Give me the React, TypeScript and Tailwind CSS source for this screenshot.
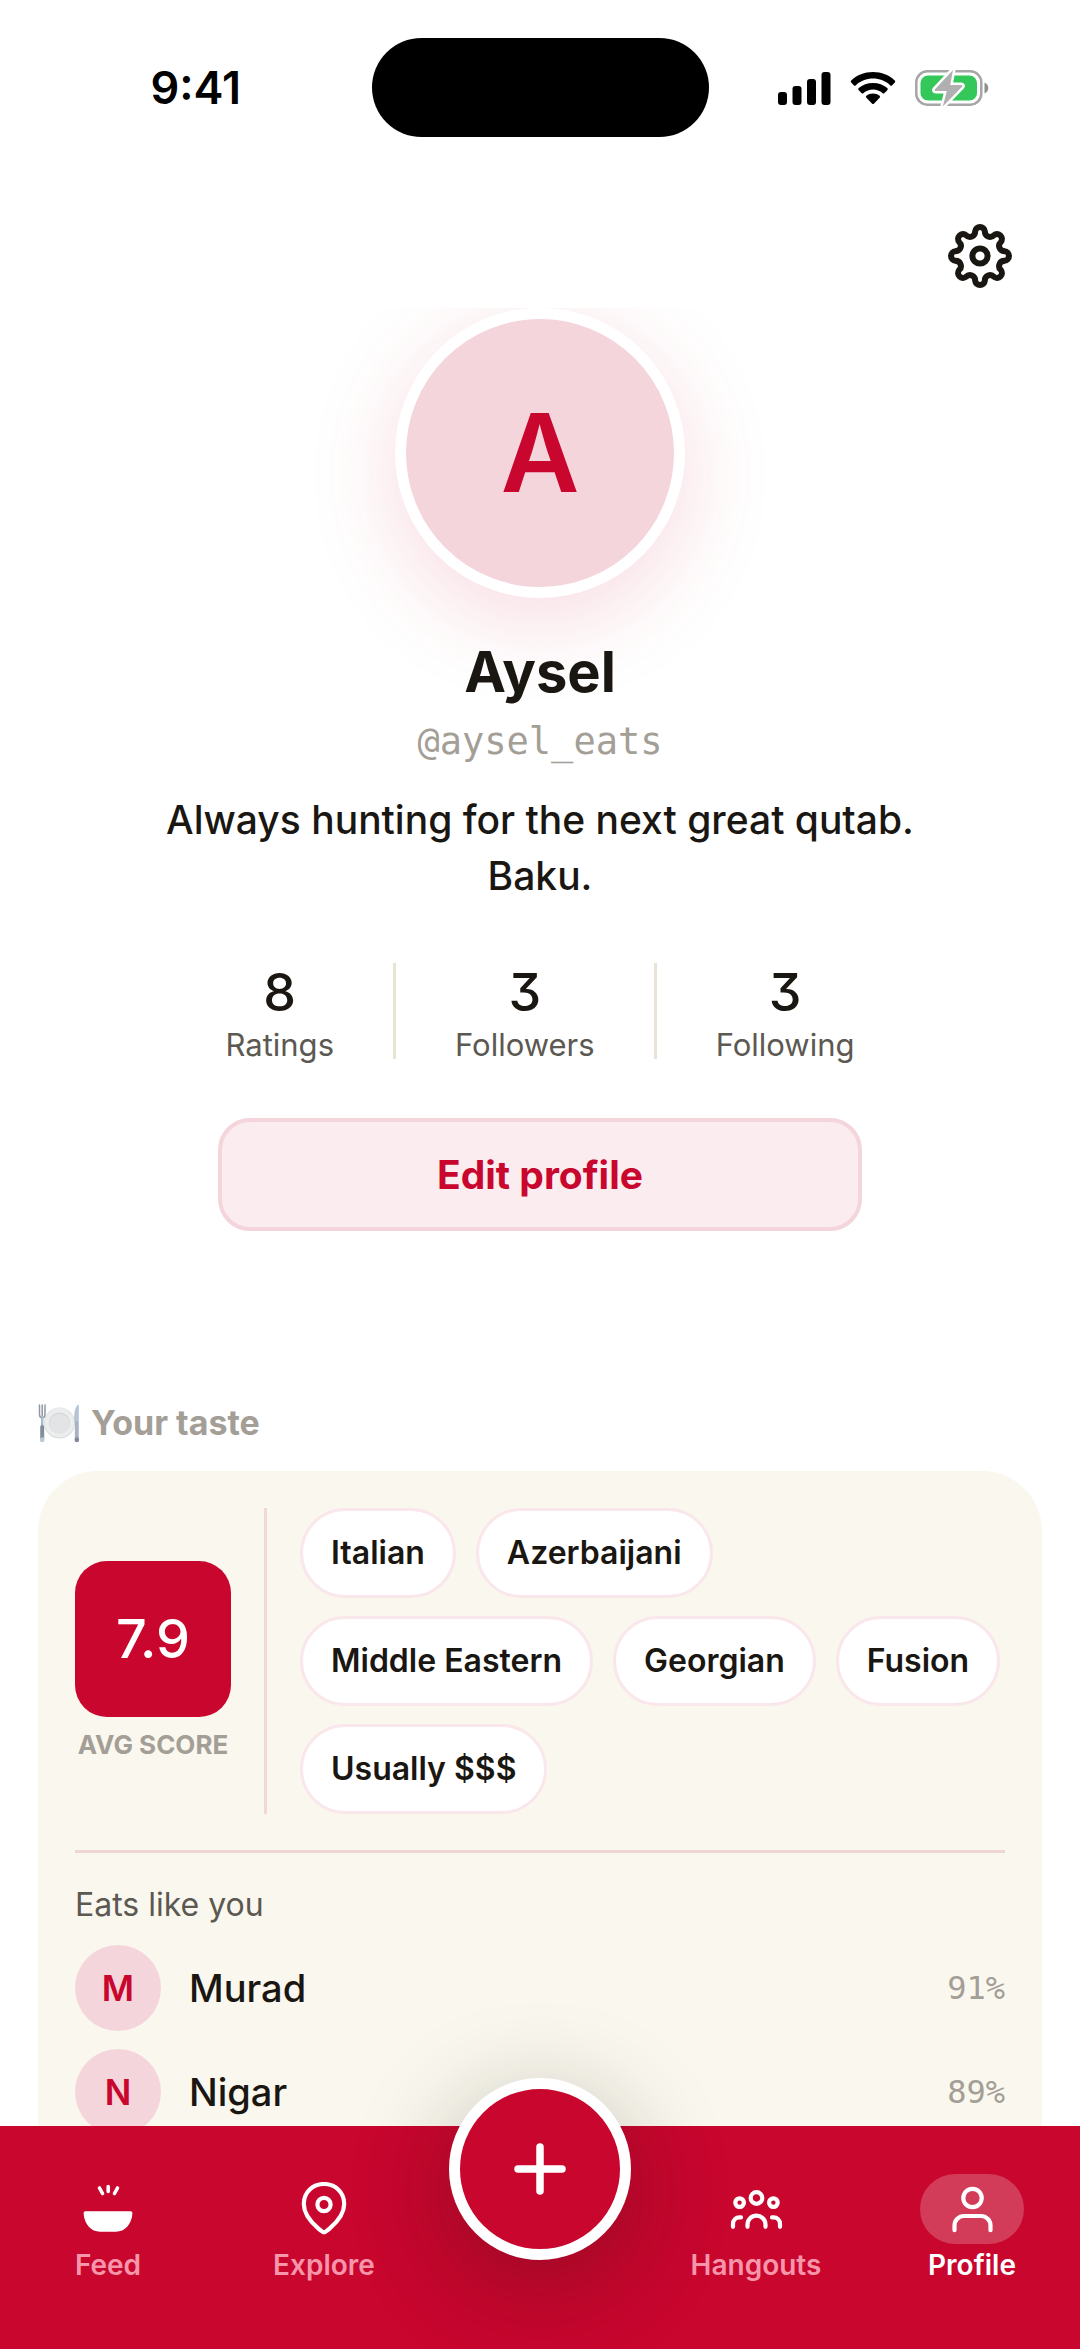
import type { ReactNode } from "react";

const stats = [
  { value: "8", label: "Ratings" },
  { value: "3", label: "Followers" },
  { value: "3", label: "Following" },
];

const tastes = ["Italian", "Azerbaijani", "Middle Eastern", "Georgian", "Fusion", "Usually $$$"];

const matches = [
  { name: "Murad", score: "91%" },
  { name: "Nigar", score: "89%" },
];

/* Eight rounded lobes joined by eight rounded valleys. */
function gearPath() {
  const radius = 25;
  let d = "";
  for (let i = 0; i <= 16; i++) {
    const a = ((i * 22.5 - 11.25 - 90) * Math.PI) / 180;
    const x = (radius * Math.cos(a)).toFixed(2);
    const y = (radius * Math.sin(a)).toFixed(2);
    if (i === 0) d += `M${x} ${y}`;
    else d += i % 2 === 1 ? `A4.9 4.9 0 0 1 ${x} ${y}` : `A5.2 5.2 0 0 0 ${x} ${y}`;
  }
  return d + "Z";
}

function GearIcon() {
  return (
    <svg width="72" height="72" viewBox="-36 -36 72 72" fill="none" stroke="currentColor" strokeWidth="6" strokeLinejoin="round" aria-hidden="true">
      <path d={gearPath()} />
      <circle r="7.6" />
    </svg>
  );
}

function StatusIcons() {
  return (
    <svg width="212" height="38" viewBox="0 0 212 38" role="img" aria-label="Signal, Wi-Fi, battery charging">
      <g>
        <rect x="0" y="23" width="9" height="13" rx="3" />
        <rect x="14.500" y="17" width="9" height="19" rx="3" />
        <rect x="29" y="10" width="9" height="26" rx="3" />
        <rect x="43.500" y="3" width="9" height="33" rx="3" />
      </g>
      <g>
        <path d="M73.200 13.500a1.500 1.500 0 0 1 0-2.100C79 6 86.500 3 95 3s16 3 21.800 8.400a1.500 1.500 0 0 1 0 2.100l-2.600 2.700a1.500 1.500 0 0 1-2.100 0C107.500 12 101.500 9.600 95 9.600S82.500 12 77.900 16.200a1.500 1.500 0 0 1-2.100 0z" />
        <path d="M80.700 21.200a1.500 1.500 0 0 1 0-2.100C84.500 15.700 89.500 13.900 95 13.900s10.500 1.800 14.300 5.200a1.500 1.500 0 0 1 0 2.100l-2.800 2.800a1.500 1.500 0 0 1-2.100 0c-2.500-2.200-5.800-3.400-9.400-3.400s-6.900 1.200-9.400 3.400a1.500 1.500 0 0 1-2.100 0z" />
        <path d="M88.400 28.800a1.400 1.400 0 0 1 0-2.100C90.300 25.300 92.500 24.600 95 24.600s4.700.7 6.600 2.100a1.400 1.400 0 0 1 0 2.100l-5.500 5.700a1.500 1.500 0 0 1-2.200 0z" />
      </g>
      <g>
        <rect x="138.300" y="2.300" width="65" height="33.400" rx="11" fill="none" stroke="#a6a6a6" strokeWidth="2.500" />
        <path d="M206.500 13.500c2.400 1 3.800 3.100 3.800 5.500s-1.400 4.500-3.800 5.500z" fill="#8e8e8e" />
        <rect x="142.500" y="6.500" width="56.500" height="25" rx="7.500" fill="#34c759" />
        <path d="M175 1l-18 19.200c-.8.900-.4 1.800.8 1.800h11l-4 15.500L184 17.800c.8-.9.400-1.800-.8-1.800h-11z" fill="#b0b0b0" stroke="#fff" strokeWidth="5" strokeLinejoin="round" paintOrder="stroke" />
      </g>
    </svg>
  );
}

function PlateIcon() {
  return (
    <svg width="43" height="40" viewBox="0 0 43 40" aria-hidden="true" className="shrink-0">
      <circle cx="21.500" cy="20" r="15.500" fill="#dcdfe2" />
      <circle cx="21.500" cy="19.700" r="14.600" fill="#eceded" />
      <circle cx="21.500" cy="20" r="10.500" fill="#d3d6da" />
      <circle cx="21.500" cy="20.500" r="9.800" fill="#e3e4e5" />
      <g fill="none" strokeLinecap="round">
        <path d="M1.500 2v9c0 2.500 1 3.800 2.700 3.800S7 13.500 7 11V2M4.200 2v12" stroke="#8f98a3" strokeWidth="1.500" />
        <path d="M4.200 14v10" stroke="#a9bccd" strokeWidth="2.400" />
        <path d="M4.200 24v12" stroke="#858d98" strokeWidth="4" />
        <path d="M4.200 36.500v.5" stroke="#b8c9da" strokeWidth="4.500" />
      </g>
      <path d="M40.800 1.500c-3.600 1.500-5 8-4.600 17.500h4.600z" fill="#b3c4d4" />
      <path d="M38.800 20v15" stroke="#a9b4c2" strokeWidth="4" strokeLinecap="round" />
      <path d="M38.800 36.500v.5" stroke="#7f8997" strokeWidth="4.500" strokeLinecap="round" />
    </svg>
  );
}

function NavIcon({ children }: { children: ReactNode }) {
  return (
    <svg width="54" height="54" viewBox="-27 -27 54 54" fill="none" stroke="#fff" strokeWidth="4.200" strokeLinecap="round" strokeLinejoin="round" aria-hidden="true">
      {children}
    </svg>
  );
}

function NavItem({ label, active = false, children }: { label: string; active?: boolean; children: ReactNode }) {
  return (
    <a
      href={"#" + label.toLowerCase()}
      aria-current={active ? "page" : undefined}
      className={"flex flex-col items-center gap-1 pt-12 text-[28px]/[34px] font-semibold " + (active ? "text-white" : "text-[#f796aa]")}
    >
      <span className={"flex h-[70px] w-[104px] items-center justify-center rounded-full " + (active ? "bg-[#d33c59]" : "")}>
        <NavIcon>{children}</NavIcon>
      </span>
      {label}
    </a>
  );
}

export default function App() {
  return (
    <div className="flex h-screen flex-col overflow-hidden bg-white font-['Inter',sans-serif] text-[#1a1611]">
      <div className="flex shrink-0 items-center pt-[38px] text-black">
        <div className="flex flex-1 justify-center pl-5 text-[45px]/[54px] font-semibold">9:41</div>
        <div className="h-[99px] w-[337px] rounded-full bg-black" />
        <div className="flex flex-1 justify-center pr-5">
          <StatusIcons />
        </div>
      </div>

      <header className="flex shrink-0 justify-end px-14 pt-[75px] pb-2">
        <button type="button" aria-label="Settings" className="flex size-[88px] items-center justify-center">
          <GearIcon />
        </button>
      </header>

      <main className="min-h-0 flex-1 overflow-hidden">
        <section className="flex flex-col items-center text-center">
          <div className="flex size-[290px] items-center justify-center rounded-full border-[11px] border-white bg-[#f5d5dc] text-[108px]/[130px] font-semibold text-[#c8062e] shadow-[0_22px_92px_rgba(200,6,46,0.15)]">
            A
          </div>
          <h1 className="mt-10 text-[56px]/[68px] font-bold">Aysel</h1>
          <p className="mt-[14px] font-['DejaVu_Sans_Mono',monospace] text-[37px]/[44px] text-[#a39e96]">@aysel_eats</p>
          <p className="mt-7 w-[780px] text-[39px]/[56px] font-medium">Always hunting for the next great qutab. Baku.</p>

          <div className="mt-[59px] flex gap-[59px]">
            {stats.map((s, i) => (
              <div key={s.label} className="flex gap-[59px]">
                {i > 0 && <div className="h-24 w-[3px] bg-[#e8e3d5]" />}
                <div>
                  <div className="text-[52px]/[60px] font-medium [font-feature-settings:'cv09']">{s.value}</div>
                  <div className="mt-1 text-[31px]/[36px] text-[#5c5852]">{s.label}</div>
                </div>
              </div>
            ))}
          </div>

          <button type="button" className="mt-[55px] h-[113px] w-[644px] rounded-[32px] border-4 border-[#f5d5dc] bg-[#fbecef] text-[39px]/[48px] font-bold text-[#c8062e]">
            Edit profile
          </button>
        </section>

        <section className="mt-[172px] px-[38px]">
          <h2 className="flex items-center gap-[10px] text-[34px]/[40px] font-bold text-[#a39e96]">
            <PlateIcon />
            Your taste
          </h2>
          <div className="mt-7 rounded-t-[60px] bg-[#faf7ee] p-[37px] pb-20">
            <div className="flex gap-[33px]">
              <div className="flex w-[156px] shrink-0 flex-col items-center justify-center">
                <div className="flex size-[156px] items-center justify-center rounded-[32px] bg-[#c8062e] text-[54px]/[64px] font-medium text-white">7.9</div>
                <div className="mt-3 text-[26px]/[32px] font-bold whitespace-nowrap text-[#a39e96]">AVG SCORE</div>
              </div>
              <div className="w-[3px] shrink-0 bg-[#f2d7d8]" />
              <ul className="flex flex-1 flex-wrap gap-x-5 gap-y-[18px]">
                {tastes.map((t) => (
                  <li key={t} className="flex h-[90px] items-center rounded-full border-[3px] border-[#fae7eb] bg-white px-7 text-[32px]/[40px] font-semibold whitespace-nowrap">
                    {t}
                  </li>
                ))}
              </ul>
            </div>

            <div className="mt-9 border-t-[3px] border-[#f0d6d3] pt-8">
              <h3 className="text-[32px]/[40px] text-[#5c5852]">Eats like you</h3>
              <ul className="mt-5 flex flex-col gap-[18px]">
                {matches.map((m) => (
                  <li key={m.name} className="flex items-center">
                    <span className="flex size-[86px] items-center justify-center rounded-full bg-[#f5d5dc] text-[35px]/[42px] font-semibold text-[#c8062e]">{m.name[0]}</span>
                    <span className="ml-7 flex-1 text-[38px]/[46px] font-medium">{m.name}</span>
                    <span className="font-['DejaVu_Sans_Mono',monospace] text-[32px]/[40px] text-[#a39e96]">{m.score}</span>
                  </li>
                ))}
              </ul>
            </div>
          </div>
        </section>
      </main>

      <nav aria-label="Main" className="relative grid shrink-0 grid-cols-5 bg-[#c8062e] pb-[67px]">
        <NavItem label="Feed">
          <path d="M-8.500 -21l3 5.500M0.200 -22.500v5M9.500 -21l-3 5.500" strokeWidth="3.600" />
          <path d="M-22.500 2.200H22.500Q24.600 2.200 24.400 4.500C23.500 15.500 17 22.700 8 22.700H-8C-17 22.700 -23.500 15.500 -24.400 4.500Q-24.600 2.200 -22.500 2.200Z" fill="#fff" stroke="none" />
        </NavItem>
        <NavItem label="Explore">
          <path d="M0 23.200C-1.500 23.200 -2.800 22 -6 19.200C-12 14 -20.200 6 -20.200 -5C-20.200 -17 -11 -25 0 -25S20.200 -17 20.200 -5C20.200 6 12 14 6 19.200C2.800 22 1.500 23.200 0 23.200Z" />
          <circle cx="0" cy="-4.500" r="6.600" />
        </NavItem>
        <div className="flex items-start justify-center">
          <button type="button" aria-label="Add rating" className="-mt-12 -mb-20 flex size-[182px] items-center justify-center rounded-full border-[11px] border-white bg-[#c8062e] shadow-[0_22px_100px_rgba(20,22,16,0.28)]">
            <svg width="60" height="60" viewBox="0 0 60 60" stroke="#fff" strokeWidth="7.500" strokeLinecap="round" aria-hidden="true">
              <path d="M30 8v44M8 30h44" />
            </svg>
          </button>
        </div>
        <NavItem label="Hangouts">
          <circle cx="0.500" cy="-11" r="5.800" />
          <circle cx="-16.400" cy="-6.400" r="4.300" />
          <circle cx="17.400" cy="-6.400" r="4.300" />
          <path d="M-8.500 17.800v-2.200a9 9 0 0 1 18 0v2.200M-23 17.800v-2.800c0-4 2.800-6.600 6.500-6.600h1.500M24 17.800v-2.800c0-4-2.800-6.600-6.500-6.600h-1.500" />
        </NavItem>
        <NavItem label="Profile" active>
          <circle cx="0.500" cy="-11" r="9.200" />
          <path d="M-17.500 21.200v-4.700a9.500 9.500 0 0 1 9.500-9.500h17a9.500 9.500 0 0 1 9.500 9.500v4.700" />
        </NavItem>
      </nav>
    </div>
  );
}
